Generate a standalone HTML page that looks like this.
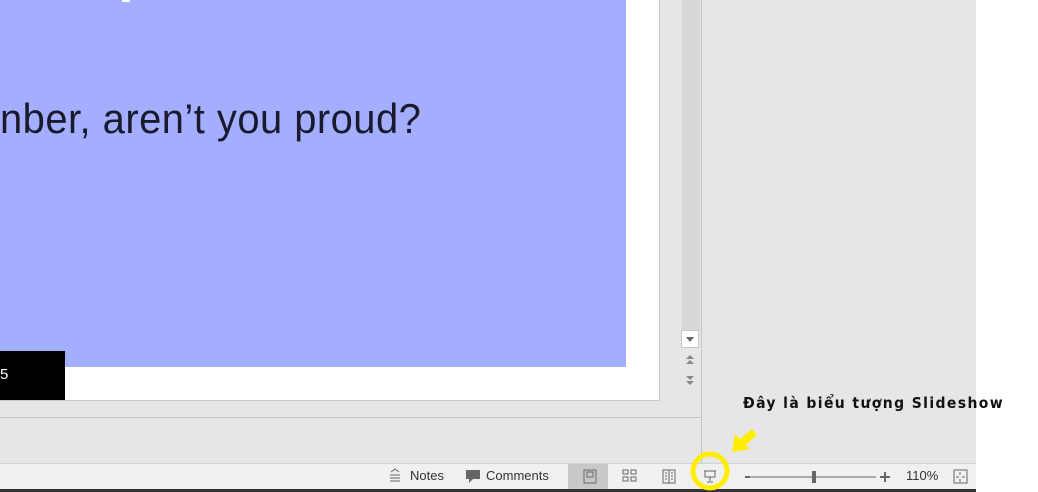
<!DOCTYPE html>
<html><head><meta charset="utf-8"><style>
body{margin:0;width:1038px;height:492px;overflow:hidden;background:#fff;font-family:"Liberation Sans",sans-serif;position:relative}
.a{position:absolute}
</style></head><body>
<div class="a" style="left:0;top:0;width:976px;height:492px;background:#e6e6e6"></div>
<div class="a" style="left:0;top:0;width:659px;height:400px;background:#fff;border-right:1px solid #c8c8c8;border-bottom:1px solid #c8c8c8"></div>
<div class="a" style="left:0;top:0;width:626px;height:367px;background:#a4aefe"></div>
<div class="a" style="left:122px;top:0;width:8px;height:2px;background:#fff"></div>
<div class="a" style="left:0;top:95px;width:600px;font-size:42px;font-weight:300;color:#1a1a2e;transform:scaleX(0.95);transform-origin:0 0;white-space:nowrap;letter-spacing:0.5px">nber, aren’t you proud?</div>
<div class="a" style="left:0;top:351px;width:65px;height:49px;background:#000"></div>
<div class="a" style="left:0;top:366px;color:#fff;font-size:15px">5</div>
<div class="a" style="left:682px;top:0;width:18px;height:330px;background:#d8d8d8"></div>
<div class="a" style="left:681px;top:330px;width:18px;height:18px;background:#fff;border:1px solid #c8c8c8;box-sizing:border-box"></div>
<svg class="a" style="left:681px;top:330px" width="19" height="60"><path d="M5 7h8l-4 5z" fill="#666"/><path d="M9 25l4 4H5zM9 30l4 4H5z" fill="#888"/><path d="M5 46h8l-4 4zM5 51h8l-4 4z" fill="#888"/></svg>
<div class="a" style="left:701px;top:0;width:1px;height:463px;background:#c6c6c6"></div>
<div class="a" style="left:0;top:417px;width:701px;height:1px;background:#c6c6c6"></div>
<div class="a" style="left:743px;top:394px;font-size:15.5px;font-weight:bold;color:#111;letter-spacing:1.4px;white-space:nowrap;font-family:'DejaVu Sans Condensed','Liberation Sans',sans-serif">Đây là biểu tượng Slideshow</div>
<div class="a" style="left:0;top:463px;width:976px;height:26px;background:#f0f0f0;border-top:1px solid #d4d4d4;box-sizing:border-box"></div>
<div class="a" style="left:0;top:489px;width:976px;height:3px;background:#333"></div>
<div class="a" style="left:568px;top:464px;width:40px;height:25px;background:#c8c8c8"></div>
<svg class="a" style="left:380px;top:464px" width="600" height="26">
<g stroke="#666" fill="none" stroke-width="1">
<path d="M11 8l4-3 4 3M10 11h10M10 14h10M10 17h10"/>
<rect x="204" y="6" width="12" height="13"/><rect x="207" y="8" width="6" height="5"/>
<rect x="243" y="6" width="5" height="4"/><rect x="251" y="6" width="5" height="4"/><rect x="243" y="13" width="5" height="4"/><rect x="251" y="13" width="5" height="4"/>
<path d="M283 6h12v13h-12zM289 6v13M285 9h2M285 12h2M285 15h2M291 9h2M291 12h2M291 15h2"/>
<path d="M324 7h12M325 7v6h10v-6M330 13v4M327 18h6"/>
<path d="M365 13h5" stroke-width="2"/><path d="M370 13h126"/>
<path d="M500 13h10M505 8v10" stroke-width="2"/>
<rect x="574" y="6" width="13" height="13"/><path d="M580 8v3M580 15v3M576 13h3M582 13h3"/>
</g>
<rect x="86" y="6" width="14" height="9" fill="#666"/><path d="M89 15v4l4-4z" fill="#666"/>
<rect x="432" y="7" width="4" height="12" fill="#666"/>
</svg>
<div class="a" style="left:410px;top:468px;font-size:13px;color:#333">Notes</div>
<div class="a" style="left:486px;top:468px;font-size:13px;color:#333">Comments</div>
<div class="a" style="left:906px;top:468px;font-size:13px;color:#333">110%</div>
<svg class="a" style="left:680px;top:420px" width="90" height="72">
<circle cx="30" cy="51" r="17" fill="none" stroke="#ffee00" stroke-width="5"/>
<path d="M52 32L55 14L60 19L72 9L77 15L66 25L70 29Z" fill="#ffee00"/>
</svg>
</body></html>
